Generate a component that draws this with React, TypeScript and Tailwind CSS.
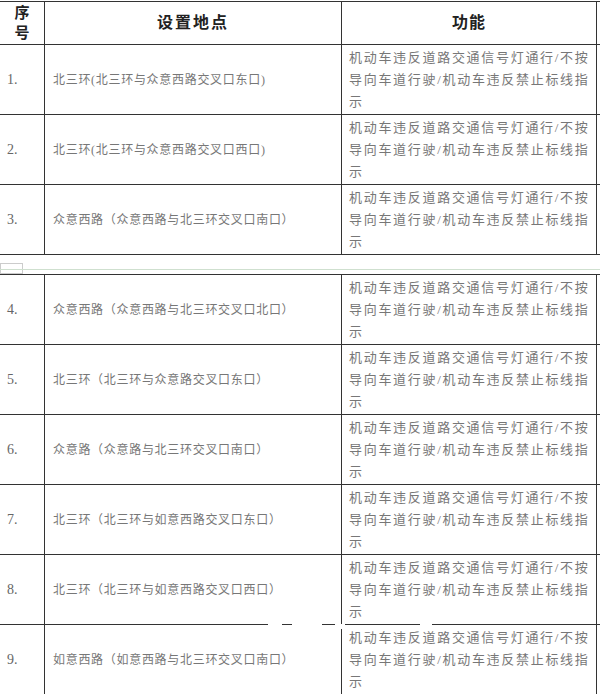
const FUNC = ['机动车违反道路交通信号灯通行/不按', '导向车道行驶/机动车违反禁止标线指', '示']

const ROWS_A = [
  { no: '1.', place: '北三环(北三环与众意西路交叉口东口)' },
  { no: '2.', place: '北三环(北三环与众意西路交叉口西口)' },
  { no: '3.', place: '众意西路（众意西路与北三环交叉口南口）' },
]

const ROWS_B = [
  { no: '4.', place: '众意西路（众意西路与北三环交叉口北口）' },
  { no: '5.', place: '北三环（北三环与众意路交叉口东口）' },
  { no: '6.', place: '众意路（众意路与北三环交叉口南口）' },
  { no: '7.', place: '北三环（北三环与如意西路交叉口东口）' },
  { no: '8.', place: '北三环（北三环与如意西路交叉口西口）' },
  { no: '9.', place: '如意西路（如意西路与北三环交叉口南口）' },
]

const cjk = { fontFamily: '"Liberation Serif", "Noto Sans CJK SC", serif' }

function Row({ no, place }: { no: string; place: string }) {
  return (
    <div className="grid h-[70px] grid-cols-[45px_297px_255px] border-b border-[#333]">
      <div className="flex items-center border-r border-[#333] pl-[7px] text-[14px] text-[#666]">{no}</div>
      <div className="flex items-center border-r border-[#333] pl-[8px] text-[12px] tracking-[0.7px] text-[#777]">
        {place}
      </div>
      <div className="flex flex-col justify-center border-r border-[#333] pl-[7px] text-[13px] leading-[22px] tracking-[1.7px] text-[#777]">
        {FUNC.map((l) => (
          <div key={l} className="whitespace-nowrap">{l}</div>
        ))}
      </div>
    </div>
  )
}

export default function App() {
  return (
    <div className="relative h-[694px] w-[600px] overflow-hidden bg-white pt-px" style={cjk}>
      <div className="border-t border-[#333]">
        <div className="grid h-[43px] grid-cols-[45px_297px_255px] border-b border-[#333] font-bold text-[#222]">
          <div className="flex flex-col items-center justify-center border-r border-[#333] text-[15px] leading-[20px]">
            <span>序</span>
            <span>号</span>
          </div>
          <div className="flex items-center justify-center border-r border-[#333] text-[16px] tracking-[2px]">设置地点</div>
          <div className="flex items-center justify-center border-r border-[#333] text-[16px] tracking-[1px]">功能</div>
        </div>
        {ROWS_A.map((r) => (
          <Row key={r.no} {...r} />
        ))}
      </div>

      <div className="relative h-[19px]">
        <div className="absolute left-0 top-[8px] h-[11px] w-[23px] border border-[#ccc]" />
        <div className="absolute left-0 right-0 top-[14px] h-px bg-[#cfe0cf]" />
      </div>

      <div className="border-t border-[#333]">
        {ROWS_B.map((r) => (
          <Row key={r.no} {...r} />
        ))}
      </div>

      <div className="absolute left-[268px] top-[624px] h-[5px] w-[14px] bg-white" />
      <div className="absolute left-[292px] top-[624px] h-[5px] w-[30px] bg-white" />
      <div className="absolute left-[335px] top-[624px] h-[5px] w-[10px] bg-white" />
      <div className="absolute left-[420px] top-[624px] h-[5px] w-[12px] bg-white" />
    </div>
  )
}
